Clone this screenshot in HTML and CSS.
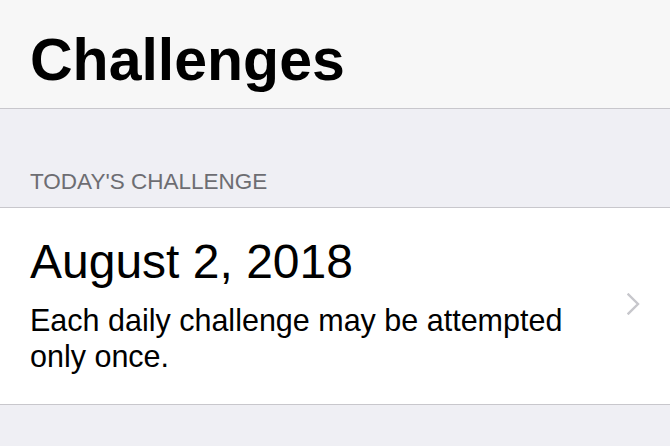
FILE: index.html
```html
<!DOCTYPE html>
<html>
<head>
<meta charset="utf-8">
<link rel="stylesheet" href="styles.css">
</head>
<body>
<div class="page">
  <header class="nav">
    <h1 class="nav-title">Challenges</h1>
  </header>
  <div class="section-header">TODAY'S CHALLENGE</div>
  <div class="cell">
    <div class="cell-text">
      <div class="cell-title">August 2, 2018</div>
      <div class="cell-desc">Each daily challenge may be attempted only once.</div>
    </div>
    <svg class="chevron" width="13" height="22" viewBox="0 0 13 22">
      <path d="M1.5 1.5 L11 11 L1.5 20.5" fill="none" stroke="#c7c7cc" stroke-width="2.4" stroke-linecap="square" stroke-linejoin="miter"/>
    </svg>
  </div>
</div>
</body>
</html>
```

FILE: styles.css
```css
html, body {
  margin: 0;
  padding: 0;
  background: #efeff4;
}
.page {
  width: 670px;
  height: 446px;
  overflow: hidden;
  font-family: "Liberation Sans", Arial, sans-serif;
  background: #efeff4;
}
.nav {
  height: 109px;
  box-sizing: border-box;
  background: #f7f7f7;
  border-bottom: 1px solid #c8c7cc;
  padding: 25px 30px 0;
}
.nav-title {
  margin: 0;
  font-size: 59px;
  line-height: 70px;
  font-weight: bold;
  color: #000;
}
.section-header {
  padding: 60px 30px 12px;
  font-size: 22.5px;
  line-height: 26px;
  color: #6d6d72;
  border-bottom: 1px solid #c8c7cc;
}
.cell {
  display: flex;
  align-items: center;
  background: #fff;
  padding: 25px 30px 30px;
  border-bottom: 1px solid #c8c7cc;
}
.cell-text {
  flex: 1;
  max-width: 565px;
}
.cell-title {
  font-size: 48px;
  line-height: 58px;
  color: #000;
}
.cell-desc {
  margin-top: 11px;
  font-size: 30.5px;
  line-height: 36px;
  color: #000;
}
.chevron {
  margin-left: auto;
  flex: none;
  display: block;
}
```
